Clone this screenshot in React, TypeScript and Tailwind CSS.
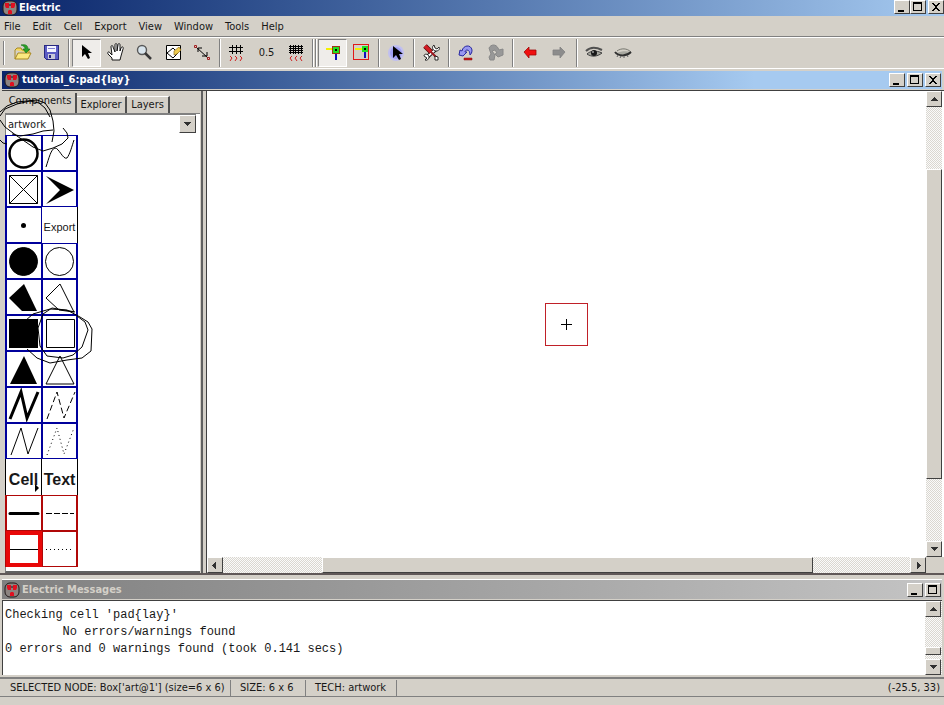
import type { ReactNode } from "react";

const RAISED = "bg-[#d4d0c8] border border-t-white border-l-white border-r-[#404040] border-b-[#404040]";
const DITHER = "bg-[#eae8e4] bg-[repeating-conic-gradient(#dad7d0_0_25%,#fafafa_0_50%)] bg-size-[2px_2px]";

const menus = ["File", "Edit", "Cell", "Export", "View", "Window", "Tools", "Help"];

function Outlet() {
  return (
    <svg viewBox="0 0 16 16" className="size-4 shrink-0" aria-hidden="true">
      <rect x="1" y="1" width="14" height="14" rx="5" fill="#8c8480" stroke="#201818" />
      <path d="M3 3h4v5H4L3 6zM9 3h4v3l-1 2H9zM6 11l1-1h2l1 1v3H6z" fill="#e01020" />
      <path d="M7 4l1 2 1-2" stroke="#503838" fill="none" />
    </svg>
  );
}

function WinButton({ kind }: { kind: "min" | "max" | "close" }) {
  return (
    <button aria-label={kind} className={`${RAISED} flex h-[14px] w-4 items-center justify-center`}>
      <svg viewBox="0 0 12 10" className="h-[10px] w-3" shapeRendering="crispEdges">
        {kind === "min" && <path d="M2 8h6v2H2z" />}
        {kind === "max" && <path d="M1 0h9v9H1zM2 2v6h7V2z" fillRule="evenodd" />}
        {kind === "close" && (
          <path d="M2 1h2v1h1v1h2V2h1V1h2v1H9v1H8v1H7v2h1v1h1v1h1v1H8V8H7V7H5v1H4v1H2V8h1V7h1V6h1V4H4V3H3V2H2z" />
        )}
      </svg>
    </button>
  );
}

function Arrow({ dir }: { dir: "up" | "down" | "left" | "right" }) {
  const d = {
    up: "M4 2h1v1h1v1h1v1h1v1H1V5h1V4h1V3h1z",
    down: "M1 2h7v1H7v1H6v1H5v1H4V5H3V4H2V3H1z",
    left: "M5 1v7H4V7H3V6H2V5H1V4h1V3h1V2h1V1z",
    right: "M3 1h1v1h1v1h1v1h1v1H6v1H5v1H4v1H3z",
  }[dir];
  return (
    <svg viewBox="0 0 9 9" className="size-[9px]" fill="#303030" shapeRendering="crispEdges">
      <path d={d} />
    </svg>
  );
}

function ScrollButton({ dir }: { dir: "up" | "down" | "left" | "right" }) {
  return (
    <button aria-label={`Scroll ${dir}`} className={`${RAISED} flex size-4 shrink-0 items-center justify-center`}>
      <Arrow dir={dir} />
    </button>
  );
}

/* ---------- toolbar ---------- */

function Tool({ label, pressed, children }: { label: string; pressed?: boolean; children: ReactNode }) {
  return (
    <button
      aria-label={label}
      className={
        pressed
          ? "flex h-7 w-[29px] items-center justify-center border border-t-[#808080] border-l-[#808080] border-r-white border-b-white bg-[#efedea]"
          : "flex h-7 w-[29px] items-center justify-center"
      }
    >
      {children}
    </button>
  );
}

function Sep({ wide }: { wide?: boolean }) {
  return (
    <div className={wide ? "flex h-7 w-2 justify-center gap-px" : "flex h-7 w-[6px] justify-center"}>
      <div className="w-[2px] border-l border-[#808080] border-r border-r-white" />
      {wide && <div className="w-[2px] border-l border-[#808080] border-r border-r-white" />}
    </div>
  );
}

function Icon({ children, crisp }: { children: ReactNode; crisp?: boolean }) {
  return (
    <svg viewBox="1 1 20 20" className="size-5" fill="none" stroke="#000" shapeRendering={crisp ? "crispEdges" : "auto"}>
      {children}
    </svg>
  );
}

const cursor = "M0 0v12l3-3 3 5 2-1-2-5h4z";

function Toolbar() {
  return (
    <div className="flex h-[31px] items-center border-t border-white">
      <div className="h-6 w-1 border-r border-[#808080]" />
      <div className="h-6 w-1 border-l border-white" />
      <Tool label="Open">
        <Icon>
          <path d="M3 8l2-2h4l1 2h7v3" fill="#f4d860" stroke="#a88820" />
          <path d="M3 17V8M3 17l3-6h13l-3 6z" fill="#fbe880" stroke="#a88820" />
          <path d="M9 3c4-1 7 0 7 4h2l-4 4-3-4h2c0-2-1-3-4-4z" fill="#28a028" stroke="#107010" strokeWidth=".6" />
        </Icon>
      </Tool>
      <Tool label="Save">
        <Icon crisp>
          <path d="M3.5 3.5h14v14h-12l-2-2z" fill="#5c5cc4" stroke="#282880" />
          <path d="M6 4h9v6H6z" fill="#f4f4ff" stroke="none" />
          <path d="M7 6.5h7" stroke="#8080d0" />
          <path d="M7 12h7v5H7z" fill="#c8c8d8" stroke="none" />
          <path d="M8 13h2v3H8z" fill="#282880" stroke="none" />
        </Icon>
      </Tool>
      <Sep />
      <Tool label="Select" pressed>
        <Icon>
          <path d={cursor} transform="translate(6 3)" fill="#000" stroke="none" />
        </Icon>
      </Tool>
      <Tool label="Pan">
        <Icon>
          <path
            d="M7 18v-2l-4-4c-1-2 1-3 2-1l2 2-1-8c0-2 2-2 2 0l2 5V3c0-2 2-2 2 0v6l1-6c0-2 2-2 2 0v6l1-3c1-2 3-1 2 1l-2 7-1 4z"
            fill="#fff"
            strokeWidth=".9"
          />
        </Icon>
      </Tool>
      <Tool label="Zoom">
        <Icon>
          <circle cx="8" cy="8" r="4.5" fill="#d8e4ec" stroke="#585858" strokeWidth="1.4" />
          <path d="M11 11l6 6" stroke="#383838" strokeWidth="2.5" />
        </Icon>
      </Tool>
      <Tool label="Outline edit">
        <Icon>
          <path d="M3.5 3.5h14v14h-14z" fill="#fff" />
          <path d="M4 11l6-5 5 5-5 5z" />
          <path d="M11 9l5-4 2 3-4 4-3 1z" fill="#f0cc50" stroke="#907020" strokeWidth=".7" />
        </Icon>
      </Tool>
      <Tool label="Measure">
        <Icon>
          <path d="M4 5l12 11M6 10V6h4M10 14h5v-4" />
          <path d="M2.5 3.5h2v2h-2zM15.500 15.500h2v2h-2z" stroke="#a02020" fill="#e8c8c8" />
        </Icon>
      </Tool>
      <Sep />
      <Tool label="Coarser grid">
        <Icon>
          <path d="M2 5.5h14M2 9.5h14M5.5 3v9M9.5 3v9M13.5 3v9" shapeRendering="crispEdges" />
          <path d="M3 14l2 2-2 3M8 14l2 2-2 3M13 14l2 2-2 3" stroke="#d02020" />
        </Icon>
      </Tool>
      <Tool label="Grid size">0.5</Tool>
      <Tool label="Finer grid">
        <Icon>
          <path
            d="M4 4.5h14M4 6.5h14M4 8.5h14M4 10.5h14M5.5 3v9M8.5 3v9M10.5 3v9M13.5 3v9M16.5 3v9"
            shapeRendering="crispEdges"
          />
          <path d="M7 14l-2 2 2 3M12 14l-2 2 2 3M17 14l-2 2 2 3" stroke="#d02020" />
        </Icon>
      </Tool>
      <Sep wide />
      <Tool label="Select objects" pressed>
        <Icon crisp>
          <path d="M4 7h6" stroke="#f4f000" strokeWidth="2" />
          <path d="M14 12v6" stroke="#1010c0" strokeWidth="2" />
          <path d="M10.5 4.5h7v7h-7z" fill="#20e020" stroke="#a03018" />
          <path d="M13 7h2v2h-2z" fill="#000" stroke="none" />
        </Icon>
      </Tool>
      <Tool label="Select area">
        <Icon crisp>
          <path d="M2.5 2.5h15v15h-15z" stroke="#e01818" />
          <path d="M4 7h7" stroke="#f4f000" strokeWidth="2" />
          <path d="M14 10v6" stroke="#1010c0" strokeWidth="2" />
          <path d="M11 4h6v6h-6z" fill="#20e020" stroke="none" />
          <path d="M13 6h2v2h-2z" fill="#000" stroke="none" />
        </Icon>
      </Tool>
      <Sep />
      <Tool label="Toggle special select">
        <Icon>
          <circle cx="10" cy="11" r="8" fill="#c0bff0" stroke="none" />
          <circle cx="10" cy="11" r="6" fill="#a0a0f4" stroke="none" />
          <path d={cursor} transform="translate(7 4)" fill="#000" stroke="none" />
        </Icon>
      </Tool>
      <Sep />
      <Tool label="Preferences">
        <Icon>
          <path d="M5 16L15 7" stroke="#202020" strokeWidth="4" />
          <path d="M5 16L15 7" stroke="#fff" strokeWidth="2" />
          <path d="M13 3c-3 2-1 6 2 6s4-2 3-4l-2 2-2-1zM3 14c0-3 5-2 5 1 0 2-2 4-4 3l2-2z" fill="#fff" strokeWidth=".8" />
          <path d="M4 4l6 6" stroke="#500808" strokeWidth="5" />
          <path d="M4 4l6 6" stroke="#d41c24" strokeWidth="3.5" />
          <path d="M10 10l6 6" stroke="#a01820" strokeWidth="2" />
          <path d="M14 14l3 1v3h-3z" fill="#fff" strokeWidth=".8" />
        </Icon>
      </Tool>
      <Sep />
      <Tool label="Undo">
        <Icon>
          <path d="M4 8l2 1c1-6 9-7 10-1 0 3-1 4-2 5 0-3-1-5-3-5-1 0-2 1-2 2h2l-4 4-4-1z" fill="#9898f0" stroke="#2828a0" />
          <path d="M8 16h8v2H8z" fill="#c81818" stroke="#801010" strokeWidth=".5" />
        </Icon>
      </Tool>
      <Tool label="Redo">
        <Icon>
          <path
            d="M4 6c2-4 7-4 9 0l1 2 4-1v6l-5 2-3-3 2-1-2-3-3 1 3 4-1 5H5l-1-3 2-3z"
            fill="#989898"
            stroke="#888"
          />
        </Icon>
      </Tool>
      <Sep />
      <Tool label="Go back">
        <Icon>
          <path d="M4 10l5-5v3h7v5H9v3z" fill="#f01010" stroke="#a00808" strokeWidth=".8" />
        </Icon>
      </Tool>
      <Tool label="Go forward">
        <Icon>
          <path d="M16 10l-5-5v3H4v5h7v3z" fill="#8c8c8c" stroke="#808080" strokeWidth=".8" />
        </Icon>
      </Tool>
      <Sep />
      <Tool label="Show all">
        <Icon>
          <path d="M2 9c4-4 10-4 16-1" stroke="#505050" strokeWidth="2" />
          <path d="M3 12c3-3 9-4 15-1-5 4-11 4-15 1z" fill="#a8a8a0" stroke="#404040" />
          <circle cx="10" cy="11" r="3" fill="#181818" stroke="none" />
          <circle cx="9" cy="10" r=".8" fill="#fff" stroke="none" />
        </Icon>
      </Tool>
      <Tool label="Hide all">
        <Icon>
          <path d="M4 9c4-3 10-3 14 1" stroke="#787870" />
          <path d="M4 11c4-2 10-2 14-1-2 4-12 4-14 1z" fill="#a8a8a0" stroke="none" />
          <path d="M2 10c4 5 12 4 16 0" stroke="#303030" strokeWidth="2" />
          <path d="M5 13l-1 2M8 14l-1 2M11 14v2M14 13l1 2" stroke="#606060" />
        </Icon>
      </Tool>
    </div>
  );
}

/* ---------- component palette ---------- */

type Entry = { name: string; art?: ReactNode; tone?: "blue" | "black" | "red" | "picked" };

const palette: Entry[] = [
  { name: "Thick circle", art: <circle cx="16.5" cy="17.5" r="14" strokeWidth="2.5" /> },
  { name: "Spline", art: <path d="M3 31C6 22 8 13 12 12c4 0 8 12 12 10 3-4 5-12 7-18" /> },
  { name: "Crossed box", art: <path d="M2.5 3.5h28v28h-28zM2.5 3.5l28 28M30.5 3.5l-28 28" /> },
  { name: "Arrow", art: <path d="M3 4l28 14L3 32l14-14z" fill="#000" stroke="none" /> },
  { name: "Pin", art: <circle cx="16.5" cy="17.5" r="2.5" fill="#000" stroke="none" /> },
  { name: "Export", tone: "black" },
  { name: "Filled circle", art: <circle cx="16.5" cy="17.5" r="14" fill="#000" /> },
  { name: "Circle", art: <circle cx="16.5" cy="17.5" r="14" /> },
  { name: "Filled polygon", art: <path d="M17 4L2 18l13 13h15z" fill="#000" stroke="none" /> },
  { name: "Polygon", art: <path d="M17 4L3 18l13 12 15 2z" /> },
  { name: "Filled box", art: <path d="M2 3h29v29H2z" fill="#000" stroke="none" /> },
  { name: "Box", art: <path d="M3.5 3.5h28v28h-28z" /> },
  { name: "Filled triangle", art: <path d="M17 4l13 28H3z" fill="#000" stroke="none" /> },
  { name: "Triangle", art: <path d="M17 4l14 28H3z" /> },
  { name: "Thick polyline", art: <path d="M3 31L14 4l6 26L31 4" strokeWidth="3" /> },
  { name: "Dashed polyline", art: <path d="M4 31L14 4l7 26L32 4" strokeDasharray="6 3" /> },
  { name: "Polyline", art: <path d="M4 31L14 4l7 26L31 4" /> },
  { name: "Dotted polyline", art: <path d="M4 31L14 4l7 26L31 4" strokeDasharray="1 3" /> },
  { name: "Cell", tone: "black" },
  { name: "Text", tone: "black" },
  { name: "Thick line", tone: "red", art: <path d="M3 17.5h28" strokeWidth="3" strokeLinecap="round" /> },
  { name: "Dashed line", tone: "red", art: <path d="M3 17.5h28" strokeDasharray="6 2" /> },
  { name: "Solid line", tone: "picked", art: <path d="M3 17.5h28" /> },
  { name: "Dotted line", tone: "red", art: <path d="M3 17.5h28" strokeDasharray="1 3" /> },
];

const tones = {
  blue: "border border-[#00009c] odd:shadow-[-1px_0_#00009c] even:border-r-2",
  black: "border-r border-black odd:shadow-[-1px_0_#000]",
  red: "border border-[#b00808] odd:shadow-[-1px_0_#b00808] even:border-r-2",
  picked: "border-4 border-[#e80808] shadow-[-1px_0_#b00808]",
};

function PaletteCell({ name, art, tone = "blue" }: Entry) {
  return (
    <button aria-label={name} className={`${tones[tone]} relative flex size-9 items-center justify-center bg-white`}>
      {art ? (
        <svg viewBox="0 0 34 34" className="size-[34px] shrink-0" fill="none" stroke="#000">
          {art}
        </svg>
      ) : (
        <span
          className={
            name === "Export"
              ? "pt-1 font-['Liberation_Sans',sans-serif] text-[11px]"
              : "pt-[6px] font-['Liberation_Sans',sans-serif] text-base font-bold"
          }
        >
          {name}
        </span>
      )}
      {name === "Cell" && (
        <svg viewBox="0 0 4 8" className="absolute right-[2px] bottom-[3px] h-2 w-1">
          <path d="M0 0l4 4-4 4z" />
        </svg>
      )}
    </button>
  );
}

// Freehand pen marks around the library selector and the Box node
function PenMarks() {
  return (
    <svg
      viewBox="0 0 100 280"
      className="pointer-events-none absolute top-0 -left-[2px] h-[280px] w-[100px]"
      fill="none"
      stroke="#000"
    >
      <path d="M0 21l7-6 10-4 10-1 10-1 8 3 5 7 3 11 1 10-2 11" />
      <path d="M0 25l5-7 12-5 13-3 9 2 6 5 5 9" />
      <path d="M0 29l5 7 12 9 16 11 10 4 10-3 9-4 6-6-1-5-4-5" />
      <path d="M12 43l8 2 13-2 10-3 10-1M0 49l3 3 4 1" />
      <path d="M25 230l8-7 17-5 17 1 13 7 8 5 4 7-1 22-9 7-15 2-17 3-13-5-10-9" />
      <path d="M77 225l8 6 3 8-6 17-9 8-10 3-16-2-7-10-2-18 5-14 9-6 18 3 5 1" />
    </svg>
  );
}

function Sidebar() {
  return (
    <aside className="relative flex w-[201px] shrink-0 flex-col border-r-2 border-[#606060] bg-[#d4d0c8] pr-px pl-[3px]">
      <div role="tablist" className="flex h-[22px] items-end">
        <button role="tab" aria-selected="true" className="h-5 w-[72px] border-r-2 border-[#505050] pb-1">
          Components
        </button>
        <button role="tab" className="h-[17px] w-[50px] border-t border-r-2 border-t-white border-r-[#505050] pb-[2px]">
          Explorer
        </button>
        <button role="tab" className="h-[17px] w-[43px] border-t border-r-2 border-t-white border-r-[#505050] pb-[2px]">
          Layers
        </button>
      </div>
      <div className="flex min-h-0 flex-1 flex-col border-t border-l border-[#808080] border-b-2 border-b-[#606060] bg-white">
        <div className="relative mr-1 h-[21px]">
          <select aria-label="Library" className="block h-5 w-full appearance-none border-t border-[#808080] bg-white pl-[2px]">
            <option>artwork</option>
          </select>
          <span className={`${RAISED} pointer-events-none absolute top-px right-0 flex h-[18px] w-[17px] items-center justify-center`}>
            <Arrow dir="down" />
          </span>
        </div>
        <div className="grid w-[72px] grid-cols-2">
          {palette.map((p) => (
            <PaletteCell key={p.name} {...p} />
          ))}
        </div>
      </div>
      <PenMarks />
    </aside>
  );
}

function Canvas() {
  return (
    <main className="ml-[3px] grid min-w-0 flex-1 grid-cols-[1fr_18px] grid-rows-[1fr_16px] border-l border-[#404040] bg-white">
      <div className="flex items-center justify-center pt-px">
        <svg viewBox="0 0 44 44" className="size-11" fill="none" shapeRendering="crispEdges">
          <path d="M.5 .5h42v42H.5z" stroke="#c02028" />
          <path d="M16 21.5h11M21.5 16v11" stroke="#000" />
        </svg>
      </div>
      <div className={`${DITHER} mr-[2px] flex flex-col`}>
        <ScrollButton dir="up" />
        <div className="flex-[62]" />
        <div className={`${RAISED} w-4 flex-[310]`} />
        <div className="flex-[62]" />
        <ScrollButton dir="down" />
      </div>
      <div className={`${DITHER} flex`}>
        <ScrollButton dir="left" />
        <div className="flex-[99]" />
        <div className={`${RAISED} flex-[490]`} />
        <div className="flex-[97]" />
        <ScrollButton dir="right" />
      </div>
      <div className="bg-[#d4d0c8]" />
    </main>
  );
}

const log = `Checking cell 'pad{lay}'
        No errors/warnings found
0 errors and 0 warnings found (took 0.141 secs)`;

export default function App() {
  return (
    <div className="flex h-screen flex-col overflow-hidden bg-[#d4d0c8] font-['DejaVu_Sans_Condensed','DejaVu_Sans',sans-serif] text-[11px] leading-4 text-[#181818]">
      <header className="flex h-4 shrink-0 items-start bg-linear-to-r from-[#0a246a] to-[#a6caf0] pl-[2px]">
        <Outlet />
        <h1 className="flex-1 pl-px font-bold text-white">Electric</h1>
        <WinButton kind="min" />
        <WinButton kind="max" />
        <div className="w-[2px]" />
        <WinButton kind="close" />
      </header>

      <nav className="flex h-[21px] shrink-0 items-center gap-3 border-b border-[#808080] pt-px pl-1">
        {menus.map((m) => (
          <button key={m}>{m}</button>
        ))}
      </nav>

      <Toolbar />

      <section className="flex min-h-0 flex-1 flex-col border-t border-white pt-[2px] pl-[2px]">
        <div className="mr-[2px] flex h-[18px] items-center gap-[2px] bg-linear-to-r from-[#0a246a] to-[#a6caf0] to-80% pr-px pl-[2px]">
          <Outlet />
          <h2 className="flex-1 font-bold text-white">{"tutorial_6:pad{lay}"}</h2>
          <WinButton kind="min" />
          <WinButton kind="max" />
          <WinButton kind="close" />
        </div>
        <div className="mt-px flex min-h-0 flex-1 border-t border-[#404040]">
          <Sidebar />
          <Canvas />
        </div>
      </section>

      <section className="flex h-[104px] shrink-0 flex-col border-t-2 border-[#605858] pl-[2px]">
        <div className="mt-1 mr-[2px] flex h-5 items-center gap-[2px] border-t border-white bg-linear-to-r from-[#808080] to-[#c4c4c4] pr-px pl-[2px]">
          <Outlet />
          <h2 className="flex-1 font-bold text-[#d4d0c8]">Electric Messages</h2>
          <WinButton kind="min" />
          <WinButton kind="max" />
        </div>
        <div className="mt-px mr-[2px] mb-[2px] flex min-h-0 flex-1 border-t border-l border-[#404040] bg-white">
          <pre className="flex-1 pt-[6px] pl-[2px] font-['Liberation_Mono',monospace] text-[12px] leading-[17px]">{log}</pre>
          <div className={`${DITHER} flex w-[17px] flex-col`}>
            <ScrollButton dir="up" />
            <div className="flex-1" />
            <div className={`${RAISED} h-2 w-4`} />
            <div className="h-1" />
            <ScrollButton dir="down" />
          </div>
        </div>
      </section>

      <footer className="shrink-0 border-t-2 border-[#808080] pb-2">
        <div className="flex h-[18px] items-center border-b border-[#808080]">
          <span className="w-[231px] border-r border-[#808080] pl-[10px]">{"SELECTED NODE: Box['art@1'] (size=6 x 6)"}</span>
          <span className="w-[75px] border-r border-[#808080] pl-[9px]">SIZE: 6 x 6</span>
          <span className="w-[91px] border-r border-[#808080] pl-[9px]">TECH: artwork</span>
          <span className="flex-1 pr-1 text-right">(-25.5, 33)</span>
        </div>
      </footer>
    </div>
  );
}
